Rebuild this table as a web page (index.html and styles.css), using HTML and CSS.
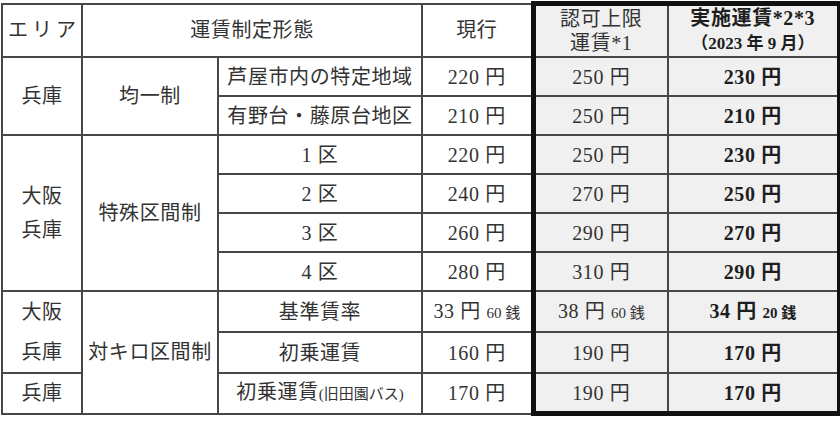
FILE: index.html
```html
<!DOCTYPE html>
<html lang="ja">
<head>
<meta charset="utf-8">
<title>運賃表</title>
<link rel="stylesheet" href="styles.css">
</head>
<body>
<table class="fare">
  <colgroup>
    <col class="c1"><col class="c2"><col class="c3"><col class="c4"><col class="c5"><col class="c6">
  </colgroup>
  <thead>
    <tr class="head">
      <th class="spaced">エリア</th>
      <th colspan="2">運賃制定形態</th>
      <th>現行</th>
      <th class="g gl gt two">認可上限<br>運賃*1</th>
      <th class="g gr gt two b">実施運賃*2*3<br><span class="sub">（2023 年 9 月）</span></th>
    </tr>
  </thead>
  <tbody>
    <tr>
      <td rowspan="2">兵庫</td>
      <td rowspan="2">均一制</td>
      <td>芦屋市内の特定地域</td>
      <td>220 円</td>
      <td class="g gl">250 円</td>
      <td class="g gr b">230 円</td>
    </tr>
    <tr>
      <td>有野台・藤原台地区</td>
      <td>210 円</td>
      <td class="g gl">250 円</td>
      <td class="g gr b">210 円</td>
    </tr>
    <tr>
      <td rowspan="4" class="two2">大阪<br>兵庫</td>
      <td rowspan="4">特殊区間制</td>
      <td>1 区</td>
      <td>220 円</td>
      <td class="g gl">250 円</td>
      <td class="g gr b">230 円</td>
    </tr>
    <tr>
      <td>2 区</td>
      <td>240 円</td>
      <td class="g gl">270 円</td>
      <td class="g gr b">250 円</td>
    </tr>
    <tr>
      <td>3 区</td>
      <td>260 円</td>
      <td class="g gl">290 円</td>
      <td class="g gr b">270 円</td>
    </tr>
    <tr>
      <td>4 区</td>
      <td>280 円</td>
      <td class="g gl">310 円</td>
      <td class="g gr b">290 円</td>
    </tr>
    <tr>
      <td rowspan="2" class="two3">大阪<br>兵庫</td>
      <td rowspan="3">対キロ区間制</td>
      <td class="nb">基準賃率</td>
      <td class="nb">33 円 <span class="small">60 銭</span></td>
      <td class="g gl">38 円 <span class="small">60 銭</span></td>
      <td class="g gr b">34 円 <span class="small">20 銭</span></td>
    </tr>
    <tr>
      <td>初乗運賃</td>
      <td>160 円</td>
      <td class="g gl">190 円</td>
      <td class="g gr b">170 円</td>
    </tr>
    <tr>
      <td>兵庫</td>
      <td>初乗運賃<span class="small">(旧田園バス)</span></td>
      <td>170 円</td>
      <td class="g gl gb">190 円</td>
      <td class="g gr gb b">170 円</td>
    </tr>
  </tbody>
</table>
</body>
</html>
```

FILE: styles.css
```css
html, body {
  margin: 0;
  padding: 0;
  background: #ffffff;
}

body {
  padding: 1px 0 0 1px;
}

.fare {
  border-collapse: collapse;
  table-layout: fixed;
  width: 837px;
  font-family: "Liberation Serif", "Noto Sans CJK JP", serif;
  font-size: 20px;
  color: #333333;
}

.c1 { width: 80px; }
.c2 { width: 136px; }
.c3 { width: 204px; }
.c4 { width: 111px; }
.c5 { width: 135px; }
.c6 { width: 171px; }

.fare th,
.fare td {
  border: 2px solid #474747;
  padding: 0;
  text-align: center;
  vertical-align: middle;
  font-weight: normal;
  height: 37px;
  line-height: 24px;
  white-space: nowrap;
  letter-spacing: 0.6px;
}

.fare .head th {
  height: 50px;
}

.fare th.spaced {
  letter-spacing: 4px;
  padding-left: 4px;
}

.fare .two {
  line-height: 24px;
}

.fare .two2 {
  line-height: 34px;
}

.fare .two3 {
  line-height: 40px;
}

.fare .g {
  background: #f0f0f0;
}

.fare .gl {
  border-left: 5px solid #111111;
}

.fare .gr {
  border-right: 5px solid #111111;
}

.fare .gt {
  border-top: 5px solid #111111;
}

.fare .gb {
  border-bottom: 5px solid #111111;
}

.fare .b {
  font-weight: bold;
  color: #1e1e1e;
}

.fare .sub {
  font-size: 17px;
  letter-spacing: 0;
}

.fare .small {
  font-size: 15px;
  letter-spacing: 0;
}

.fare td.nb {
  border-bottom: 0;
}
```
